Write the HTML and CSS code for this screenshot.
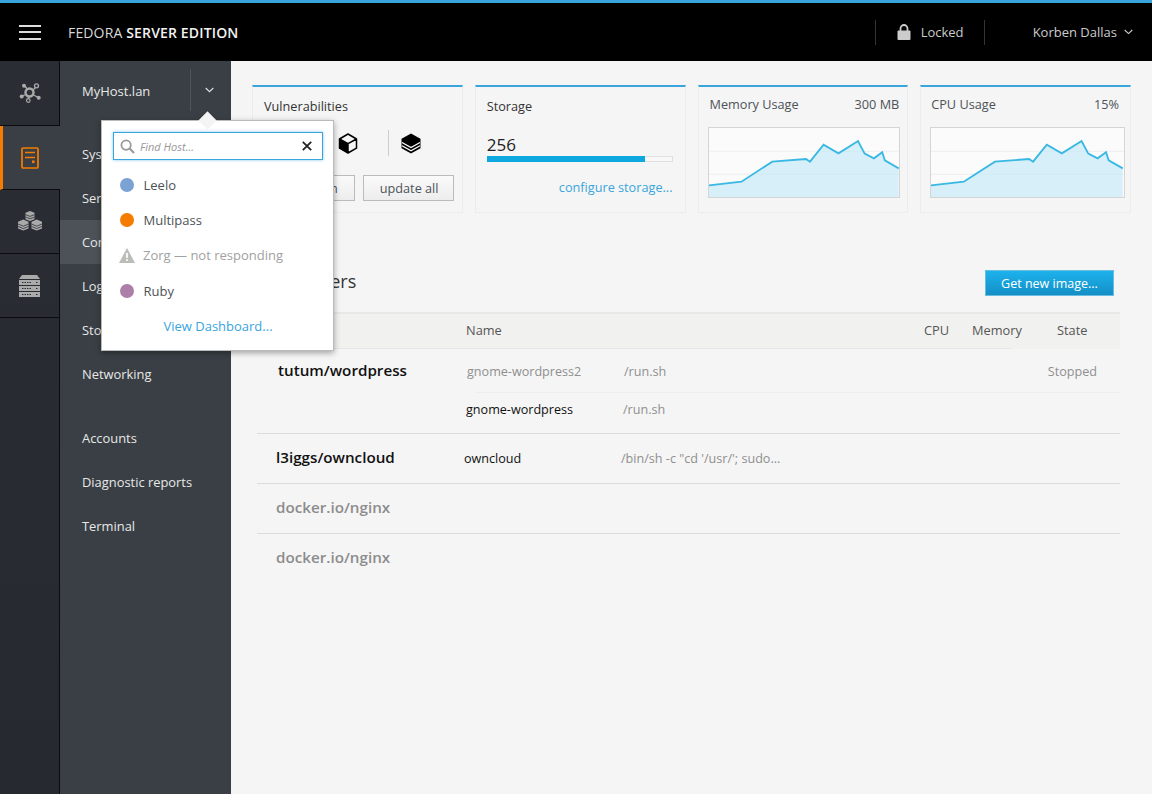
FILE: index.html
```html
<!DOCTYPE html>
<html lang="en">
<head>
<meta charset="utf-8">
<title>Fedora Server Edition</title>
<link rel="stylesheet" href="styles.css">
</head>
<body>
<div class="app">
  <header class="topbar">
    <div class="hamburger"><span></span><span></span><span></span></div>
    <div class="brand">FEDORA <b>SERVER EDITION</b></div>
    <div class="top-right">
      <div class="lock">
        <svg width="14" height="16" viewBox="0 0 14 16"><path d="M3.500 7V4.500a3.500 3.500 0 0 1 7 0V7" fill="none" stroke="#ccc" stroke-width="1.800"/><rect x="0.500" y="6.500" width="13" height="9.500" rx="1" fill="#ccc"/></svg>
        <span>Locked</span>
      </div>
      <div class="user">
        <span>Korben Dallas</span>
        <svg width="9" height="6" viewBox="0 0 9 6"><path d="M.7 1l3.800 3.600L8.300 1" fill="none" stroke="#ccc" stroke-width="1.100"/></svg>
      </div>
    </div>
  </header>
  <div class="body">
    <nav class="rail">
      <a class="rail-item">
        <svg width="24" height="24" viewBox="0 0 24 24" fill="none" stroke="#aaa">
          <path d="M7 5l5 7M19 5l-7 7M4 15l8-3M21 17l-9-5M10 19l2-7" stroke-width="1.300"/>
          <circle cx="11.500" cy="11.500" r="4" fill="#2b3036" stroke-width="2.400"/>
          <circle cx="6" cy="4.800" r="2" fill="#aaa" stroke="none"/>
          <circle cx="18.500" cy="4.800" r="2" fill="#2b3036" stroke-width="1.300"/>
          <circle cx="3.700" cy="15.500" r="2" fill="#aaa" stroke="none"/>
          <circle cx="20.700" cy="16.800" r="2" fill="#aaa" stroke="none"/>
          <circle cx="10.300" cy="19.500" r="1.800" fill="#2b3036" stroke-width="1.200"/>
        </svg>
      </a>
      <a class="rail-item active">
        <svg width="18" height="22" viewBox="0 0 18 22" fill="none" stroke="#f57c00">
          <rect x="1" y="1" width="16" height="20" rx="1" stroke-width="1.700"/>
          <path d="M4 5.500h10M4 10.500h10" stroke-width="1.700"/>
          <rect x="11" y="13.500" width="2.600" height="2.600" fill="#f57c00" stroke="none"/>
        </svg>
      </a>
      <a class="rail-item">
        <svg width="26" height="22" viewBox="0 0 26 22">
          <g fill="#aaa">
            <path d="M13 0l4.500 1.800v6.400L13 10 8.500 8.200V1.800z"/>
            <path d="M6.300 8.600l5.200 2.200v6.600L6.300 19.600 1 17.400v-6.600z"/>
            <path d="M19.700 8.600l5.300 2.200v6.600l-5.300 2.200-5.200-2.200v-6.600z"/>
          </g>
          <path d="M8.500 3.600l4.500 1.800 4.500-1.800M8.500 6l4.500 1.800L17.500 6M1 13l5.300 2.200 5.200-2.200M1 15.400l5.300 2.200 5.200-2.200M14.500 13l5.200 2.200L25 13M14.500 15.400l5.200 2.200L25 15.400" fill="none" stroke="#2b3036" stroke-width=".8"/>
        </svg>
      </a>
      <a class="rail-item">
        <svg width="21" height="22" viewBox="0 0 21 22">
          <path d="M3 0h15l3 4H0z" fill="#aaa"/>
          <rect y="5" width="21" height="5" fill="#aaa"/>
          <rect y="11" width="21" height="5" fill="#aaa"/>
          <rect y="17" width="21" height="5" fill="#aaa"/>
          <path d="M3 7.500h9M3 13.500h9M3 19.500h9M17 7.500h2M17 13.500h2M17 19.500h2" stroke="#2b3036" stroke-width="1.200" stroke-dasharray="1.500 1"/>
        </svg>
      </a>
    </nav>
    <aside class="sidebar">
      <div class="host">
        <span class="host-name">MyHost.lan</span>
        <span class="host-toggle">
          <svg width="9" height="6" viewBox="0 0 9 6"><path d="M.7 1l3.800 3.600L8.300 1" fill="none" stroke="#ddd" stroke-width="1.200"/></svg>
        </span>
      </div>
      <ul class="nav">
        <li>System</li>
        <li>Services</li>
        <li class="current">Containers</li>
        <li>Logs</li>
        <li>Storage</li>
        <li>Networking</li>
        <li class="nav-gap">Accounts</li>
        <li>Diagnostic reports</li>
        <li>Terminal</li>
      </ul>
      <div class="popover">
        <div class="search">
          <svg width="15" height="15" viewBox="0 0 16 16" fill="none" stroke="#999"><circle cx="6.500" cy="6.500" r="5" stroke-width="1.900"/><path d="M10.200 10.200L15 15" stroke-width="2.200"/></svg>
          <span class="search-text">Find Host...</span>
          <svg width="10" height="10" viewBox="0 0 10 10" fill="none" stroke="#222"><path d="M.8.800l8.400 8.400M9.200.8L.8 9.200" stroke-width="1.800"/></svg>
        </div>
        <ul class="hosts">
          <li><i class="dot dot-blue"></i>Leelo</li>
          <li><i class="dot dot-orange"></i>Multipass</li>
          <li class="down">
            <svg class="warn" width="16" height="15" viewBox="0 0 16 15"><path d="M8 0l8 15H0z" fill="#bbbdb9"/><path d="M8 5v5M8 11.300v1.700" stroke="#fff" stroke-width="1.700"/></svg>
            Zorg — not responding</li>
          <li><i class="dot dot-purple"></i>Ruby</li>
        </ul>
        <a class="dash">View Dashboard...</a>
      </div>
    </aside>
    <main class="main">
      <section class="cards">
        <div class="card card-vuln">
          <h3 class="card-title">Vulnerabilities</h3>
          <div class="vuln-icons">
            <svg width="20" height="21" viewBox="0 0 20 21"><path d="M1.500 6l8.500 4.700V20L1.500 15.200z" fill="#000"/><path d="M10 1l8.500 5v9.200L10 20l-8.500-4.800V6zM1.500 6l8.500 4.700L18.500 6M10 10.700V20" fill="none" stroke="#000" stroke-width="1.500" stroke-linejoin="round"/></svg>
            <span class="vuln-sep"></span>
            <svg width="20" height="21" viewBox="0 0 20 21"><path d="M10 .5l9.500 5.300v9.400L10 20.500.5 15.200V5.800z" fill="#000"/><path d="M1 9.500l9 5 9-5M1 12.800l9 5 9-5" fill="none" stroke="#fff" stroke-width="1.300"/></svg>
          </div>
          <div class="vuln-actions">
            <button class="btn btn-main">update main</button>
            <button class="btn">update all</button>
          </div>
        </div>
        <div class="card card-storage">
          <h3 class="card-title">Storage</h3>
          <div class="storage-value">256</div>
          <div class="meter"><div class="meter-fill" style="width:86%"></div></div>
          <a class="configure">configure storage...</a>
        </div>
        <div class="card card-chart">
          <div class="chart-head"><span>Memory Usage</span><span>300 MB</span></div>
          <div class="chart">
            <svg viewBox="0 0 576 207" preserveAspectRatio="none"><path d="M0 70H576M0 139H576" stroke="#e9e9e9" stroke-width="2" fill="none"/><path d="M0 172L98 161 191 101 293 93 305 101 346 50 391 76 450 39 470 77 498 91 523 73 531 97 573 121V207H0z" fill="#bfe8f6" fill-opacity=".6"/><path d="M0 172L98 161 191 101 293 93 305 101 346 50 391 76 450 39 470 77 498 91 523 73 531 97 573 121" fill="none" stroke="#39b8e4" stroke-width="5.500"/></svg>
          </div>
        </div>
        <div class="card card-chart">
          <div class="chart-head chart-head-cpu"><span>CPU Usage</span><span>15%</span></div>
          <div class="chart chart-cpu">
            <svg viewBox="0 0 576 207" preserveAspectRatio="none"><path d="M0 70H576M0 139H576" stroke="#e9e9e9" stroke-width="2" fill="none"/><path d="M0 172L98 161 191 101 293 93 305 101 346 50 391 76 450 39 470 77 498 91 523 73 531 97 573 121V207H0z" fill="#bfe8f6" fill-opacity=".6"/><path d="M0 172L98 161 191 101 293 93 305 101 346 50 391 76 450 39 470 77 498 91 523 73 531 97 573 121" fill="none" stroke="#39b8e4" stroke-width="5.500"/></svg>
          </div>
        </div>
      </section>
      <section class="containers">
        <div class="section-head">
          <h2 class="section-title">Containers</h2>
          <button class="btn-primary">Get new image...</button>
        </div>
        <div class="table-head">
          <span class="th-name">Name</span>
          <span class="th-cpu">CPU</span>
          <span class="th-mem">Memory</span>
          <span>State</span>
        </div>
        <div class="group group-first">
          <div class="image image-a">tutum/wordpress</div>
          <div class="instances">
            <div class="inst inst-stopped">
              <span class="inst-name">gnome-wordpress2</span>
              <span class="inst-cmd">/run.sh</span>
              <span class="inst-state">Stopped</span>
            </div>
            <div class="inst-sep"></div>
            <div class="inst inst-running">
              <span class="inst-name">gnome-wordpress</span>
              <span class="inst-cmd">/run.sh</span>
            </div>
          </div>
        </div>
        <div class="group group-own">
          <div class="image image-own">l3iggs/owncloud</div>
          <div class="inst inst-own">
            <span class="inst-name">owncloud</span>
            <span class="inst-cmd">/bin/sh -c "cd '/usr/'; sudo...</span>
          </div>
        </div>
        <div class="group group-empty"><div class="image image-off">docker.io/nginx</div></div>
        <div class="group group-empty group-last"><div class="image image-off">docker.io/nginx</div></div>
      </section>
    </main>
  </div>
</div>
</body>
</html>
```
FILE: styles.css
```css
* { box-sizing: border-box; }
html, body { margin: 0; height: 100%; }
body { font-family: "Open Sans", "Liberation Sans", sans-serif; font-size: 13px; color: #333; overflow: hidden; background: #f5f5f5; }
ul { list-style: none; margin: 0; padding: 0; }
h2, h3 { margin: 0; font-weight: 400; }
.app { width: 1152px; height: 794px; display: flex; flex-direction: column; }

.topbar { height: 61px; flex: none; background: #000; border-top: 3px solid #39a5dc; display: flex; align-items: center; padding-left: 19px; color: #ccc; }
.hamburger { width: 22px; display: flex; flex-direction: column; gap: 4.5px; }
.hamburger span { height: 2px; background: #ddd; }
.brand { margin-left: 27px; font-size: 14px; font-weight: 400; color: #d8d8d8; letter-spacing: .15px; }
.brand b { font-weight: 600; color: #f2f2f2; }
.top-right { margin-left: auto; display: flex; align-items: center; height: 25px; }
.lock { width: 110px; height: 25px; border-left: 1px solid #333; border-right: 1px solid #333; display: flex; align-items: center; gap: 10px; padding-left: 21px; }
.user { display: flex; align-items: center; gap: 7px; padding: 0 19px 0 48px; }

.body { flex: 1; display: flex; min-height: 0; }
.rail { width: 60px; flex: none; background: linear-gradient(#2a2e34, #262a30); border-right: 1px solid #0c0c0c; }
.rail-item { height: 64px; display: flex; align-items: center; justify-content: center; border-bottom: 1px solid #0c0c0c; }
.rail-item:first-child { height: 65px; }
.rail-item.active { margin-right: -1px; background: #393f44; border-left: 3px solid #f57c00; position: relative; padding-right: 4px; }

.sidebar { width: 171px; flex: none; background: #393f44; color: #e8e8e8; position: relative; }
.host { height: 60px; display: flex; align-items: center; padding-left: 22px; }
.host-name { width: 108px; }
.host-toggle { height: 42px; width: 38px; border-left: 1px solid #50555a; display: flex; align-items: center; justify-content: center; margin-top: -2px; }
.nav { padding-top: 11px; }
.nav li { height: 44px; line-height: 44px; padding-left: 22px; font-size: 12.9px; }
.nav li.current { background: #4d5258; }
.nav li.nav-gap { margin-top: 20px; }

.popover { position: absolute; left: 41px; top: 59px; width: 233px; height: 231px; background: #fff; border: 1px solid #bbb; box-shadow: 0 2px 6px rgba(0,0,0,.35); padding: 11px 10px 11px 11px; color: #4d5258; }
.popover::before { content: ""; position: absolute; left: 99px; top: -7px; width: 13px; height: 13px; background: #f4f4f4; transform: rotate(45deg); box-shadow: -1px -1px 1px rgba(0,0,0,.12); }
.search { position: relative; height: 28px; border: 1px solid #39a5dc; box-shadow: 0 0 3px rgba(57,165,220,.6); display: flex; align-items: center; padding: 0 10px 0 6px; gap: 5px; }
.search-text { flex: 1; font-size: 11px; font-style: italic; color: #999; }
.hosts { margin-top: 7px; }
.hosts li { height: 35.3px; display: flex; align-items: center; gap: 9.5px; padding-left: 7px; }
.dot { width: 14px; height: 14px; border-radius: 50%; display: block; flex: none; }
.dot-blue { background: #7aa3d4; }
.dot-orange { background: #f57c00; }
.dot-purple { background: #ad7fa8; }
.hosts .down { color: #a1a1a1; gap: 8px; padding-left: 6px; }
.dash { display: block; text-align: center; color: #39a5dc; margin-top: 9px; }

.main { flex: 1; padding: 24px 21px 0; min-width: 0; }
.cards { display: grid; grid-template-columns: repeat(4, minmax(0, 1fr)); gap: 12px; font-size: 12.7px; }
.card { height: 128px; border: 1px solid #ececec; border-top: 2px solid #39a5dc; background: #f5f5f5; min-width: 0; }
.card-title { font-size: 12.7px; color: #333; line-height: 18px; margin-top: 10px; margin-left: 11px; }
.vuln-icons { display: flex; justify-content: flex-end; align-items: center; height: 30px; margin-top: 13px; padding-right: 41px; }
.vuln-sep { width: 1px; height: 26px; background: #ccc; margin: 0 12px 0 30px; }
.vuln-actions { display: flex; justify-content: flex-end; gap: 8px; padding-right: 8px; margin-top: 17px; }
.btn { height: 26px; font: inherit; color: #4d5258; background: linear-gradient(#fafafa, #ededed); border: 1px solid #bbb; padding: 0 16px; width: 91px; white-space: nowrap; flex: none; }
.btn-main { width: 120px; text-align: right; }
.storage-value { font-size: 17px; color: #222; line-height: 22px; margin: 19px 0 0 11px; }
.meter { margin: 0 12px 0 11px; height: 6px; border: 1px solid #e0e0e0; background: #f8f8f8; }
.meter-fill { height: 6px; margin: -1px 0 0 -1px; background: #0ea8e0; }
.configure { display: block; text-align: right; color: #39a5dc; margin: 16px 12px 0 0; }
.chart-head { display: flex; justify-content: space-between; padding: 8px 8px 0 11px; line-height: 18px; color: #4d5258; }
.chart-head-cpu { padding-left: 10px; padding-right: 11px; }
.chart { margin: 14px 7px 0 9px; height: 71px; border: 1px solid #d5d5d5; background: #fbfbfb; }
.chart-cpu { margin-right: 5px; }
.chart svg { display: block; width: 100%; height: 100%; }

.containers { margin: 57px 11px 0 5px; }
.section-head { display: flex; justify-content: space-between; align-items: flex-start; padding: 0 6px 0 8px; height: 42px; }
.section-title { font-size: 18px; line-height: 24px; color: #333; margin-top: -1px; }
.btn-primary { width: 129px; height: 26px; border: 1px solid #6bbde0; background: linear-gradient(#1db2ec, #148fc6); color: #fff; font: inherit; font-size: 12.5px; padding: 0; }
.table-head { height: 37px; border-top: 2px solid #e8e8e8; display: grid; grid-template-columns: 458px 48px 85px 1fr; align-items: center; padding: 0 0 3px 209px; font-size: 12.8px; color: #555; background: linear-gradient(#e6e6e6, #e6e6e6) left bottom / 754px 1px no-repeat, #f1f1ef; }
.group { display: flex; border-bottom: 1px solid #dcdcdc; }
.image { font-size: 15.2px; font-weight: 600; color: #111; width: 209px; flex: none; padding-left: 19px; line-height: 20px; }
.image-a { padding-left: 21px; padding-top: 11px; }
.image-own { margin-top: -1px; }
.image-off { color: #8c8c8c; padding-bottom: 4px; }
.instances { flex: 1; }
.inst { display: flex; align-items: center; flex: 1; font-size: 12.6px; color: #111; }
.inst-name { width: 157px; flex: none; }
.inst-cmd { color: #8f8f8f; }
.inst-state { margin-left: auto; margin-right: 23px; color: #8f8f8f; }
.inst-stopped { height: 43px; padding-left: 1px; padding-top: 1px; }
.inst-stopped .inst-name { color: #8f8f8f; }
.inst-sep { height: 1px; background: #ededed; margin-left: 10px; }
.inst-running { height: 40px; padding-bottom: 8px; }
.group-own { height: 50px; padding-top: 14px; align-items: flex-start; }
.inst-own { margin-left: -2px; height: 20px; }
.group-empty { height: 50px; align-items: center; }
.group-last { border-bottom: 0; }
```
